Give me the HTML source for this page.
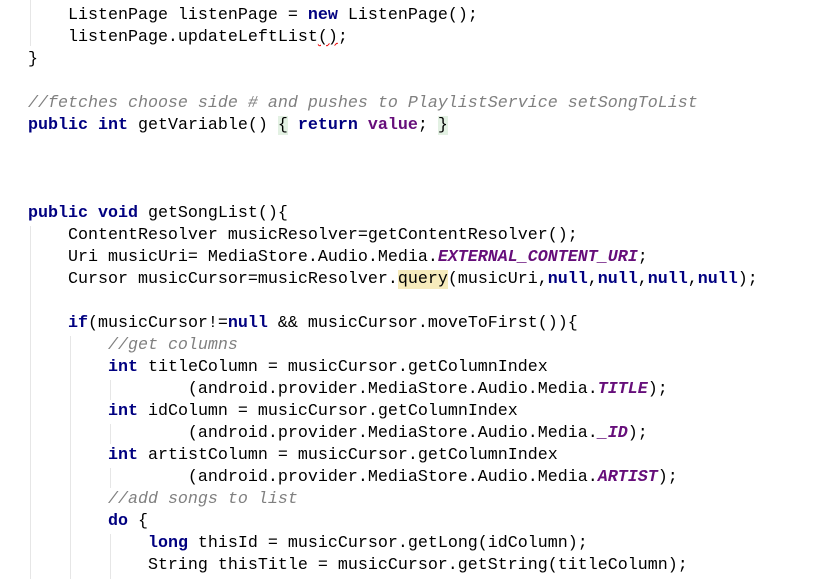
<!DOCTYPE html>
<html><head><meta charset="utf-8"><style>
body{margin:0;width:814px;height:577px;background:#fff;overflow:hidden;position:relative;font-family:"Liberation Mono","Courier New",monospace;font-size:16.67px;color:#000}
#w{position:absolute;left:0;top:2px;width:814px;height:577px}
.l{position:absolute;left:28px;height:22px;line-height:22px;white-space:pre}
.k{color:#000080;font-weight:bold}
.c{color:#808080;font-style:italic}
.p{color:#660E7A;font-style:italic;font-weight:bold}
.g{background:#e3f1e3}
.q{background:#f6ebbc}
.w{text-decoration:underline wavy #e00;text-decoration-thickness:1px}
.v{position:absolute;width:1px;background:#e6e6e6}
</style></head><body><div id="w">
<div class="v" style="left:30px;top:-2px;height:46px"></div>
<div class="v" style="left:30px;top:224px;height:353px"></div>
<div class="v" style="left:70px;top:334px;height:243px"></div>
<div class="v" style="left:110px;top:378px;height:20px"></div>
<div class="v" style="left:110px;top:422px;height:20px"></div>
<div class="v" style="left:110px;top:466px;height:20px"></div>
<div class="v" style="left:110px;top:532px;height:45px"></div>
<div class="l" style="top:3px">    ListenPage listenPage = <span class="k">new</span> ListenPage();</div>
<div class="l" style="top:25px">    listenPage.updateLeftList<span class="w">()</span>;</div>
<div class="l" style="top:47px">}</div>
<div class="l" style="top:91px"><span class="c">//fetches choose side # and pushes to PlaylistService setSongToList</span></div>
<div class="l" style="top:113px"><span class="k">public int</span> getVariable() <span class="g">{</span> <span class="k">return</span> <span class="p" style="font-style:normal">value</span>; <span class="g">}</span></div>
<div class="l" style="top:201px"><span class="k">public void</span> getSongList(){</div>
<div class="l" style="top:223px">    ContentResolver musicResolver=getContentResolver();</div>
<div class="l" style="top:245px">    Uri musicUri= MediaStore.Audio.Media.<span class="p">EXTERNAL_CONTENT_URI</span>;</div>
<div class="l" style="top:267px">    Cursor musicCursor=musicResolver.<span class="q">query</span>(musicUri,<span class="k">null</span>,<span class="k">null</span>,<span class="k">null</span>,<span class="k">null</span>);</div>
<div class="l" style="top:311px">    <span class="k">if</span>(musicCursor!=<span class="k">null</span> &amp;&amp; musicCursor.moveToFirst()){</div>
<div class="l" style="top:333px">        <span class="c">//get columns</span></div>
<div class="l" style="top:355px">        <span class="k">int</span> titleColumn = musicCursor.getColumnIndex</div>
<div class="l" style="top:377px">                (android.provider.MediaStore.Audio.Media.<span class="p">TITLE</span>);</div>
<div class="l" style="top:399px">        <span class="k">int</span> idColumn = musicCursor.getColumnIndex</div>
<div class="l" style="top:421px">                (android.provider.MediaStore.Audio.Media.<span class="p">_ID</span>);</div>
<div class="l" style="top:443px">        <span class="k">int</span> artistColumn = musicCursor.getColumnIndex</div>
<div class="l" style="top:465px">                (android.provider.MediaStore.Audio.Media.<span class="p">ARTIST</span>);</div>
<div class="l" style="top:487px">        <span class="c">//add songs to list</span></div>
<div class="l" style="top:509px">        <span class="k">do</span> {</div>
<div class="l" style="top:531px">            <span class="k">long</span> thisId = musicCursor.getLong(idColumn);</div>
<div class="l" style="top:553px">            String thisTitle = musicCursor.getString(titleColumn);</div>
</div></body></html>
